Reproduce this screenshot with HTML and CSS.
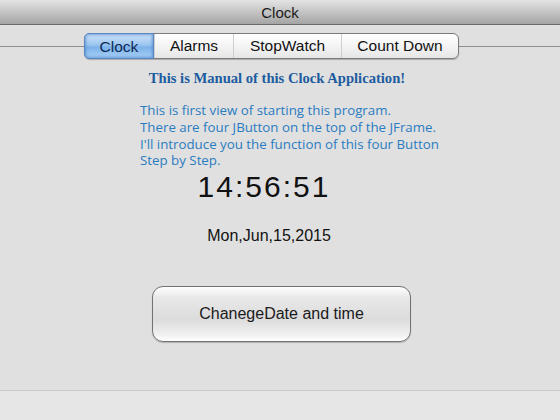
FILE: index.html
```html
<!DOCTYPE html>
<html>
<head>
<meta charset="utf-8">
<link rel="stylesheet" href="styles.css">
</head>
<body>
<div class="window">
  <div class="titlebar">Clock</div>
  <div class="tabrow">
    <div class="line-left"></div>
    <div class="tabs">
      <div class="tab selected t1">Clock</div>
      <div class="tab t2">Alarms</div>
      <div class="tab t3">StopWatch</div>
      <div class="tab t4">Count Down</div>
    </div>
    <div class="line-right"></div>
  </div>
  <div class="content">
    <h1 class="heading">This is Manual of this Clock Application!</h1>
    <p class="manual">This is first view of starting this program.<br>There are four JButton on the top of the JFrame.<br>I'll introduce you the function of this four Button<br>Step by Step.</p>
    <div class="time">14:56:51</div>
    <div class="date">Mon,Jun,15,2015</div>
    <div class="btnrow"><div class="change-btn">ChanegeDate and time</div></div>
  </div>
  <div class="footer"></div>
</div>
</body>
</html>
```
FILE: styles.css
```css
html, body {
  margin: 0;
  padding: 0;
  width: 560px;
  height: 420px;
  overflow: hidden;
  background: #e0e0e0;
  font-family: "Liberation Sans", Arial, sans-serif;
}
.window {
  width: 560px;
  height: 420px;
  display: flex;
  flex-direction: column;
}
.titlebar {
  height: 24px;
  border-bottom: 1px solid #6a6a6a;
  background: linear-gradient(#e4e4e4, #c4c4c4 50%, #a4a4a4);
  text-align: center;
  font-size: 15px;
  line-height: 25px;
  color: #1a1a1a;
}
.tabrow {
  display: flex;
  align-items: center;
  margin-top: 8px;
  height: 26px;
}
.line-left {
  width: 84px;
  height: 1px;
  background: #8e8e8e;
}
.line-right {
  flex: 1;
  height: 1px;
  background: #8e8e8e;
}
.tabs {
  display: flex;
  height: 26px;
  box-sizing: border-box;
  border: 1px solid #7a7a7a;
  border-radius: 6px;
  background: linear-gradient(#ffffff, #f4f4f4 50%, #e6e6e6);
  box-shadow: 0 1px 1px rgba(0,0,0,0.25);
}
.tab {
  font-size: 15.5px;
  line-height: 24px;
  text-align: center;
  color: #111;
  border-left: 1px solid #cfcfcf;
}
.tab.t1 { width: 69px; border-left: none; }
.t2 { width: 78px; }
.t3 { width: 107px; }
.t4 { width: 116px; }
.tab.selected {
  color: #0f2a55;
  background: linear-gradient(#cfe3f8, #9cc6f0 45%, #7cb2ea 55%, #a9d0f5);
  border-radius: 5px 0 0 5px;
  box-shadow: 0 0 3px 1px rgba(60,120,200,0.6) inset;
  margin: -1px 0 -1px -1px;
  height: 26px;
  line-height: 26px;
  width: 70px;
  border: 1px solid #5a88c0;
  box-sizing: border-box;
}
.content {
  flex: 1;
  display: flex;
  flex-direction: column;
}
.heading {
  margin: 9px 0 0 0;
  text-align: center;
  width: 554px;
  font-family: "Liberation Serif", "Times New Roman", serif;
  font-weight: bold;
  font-size: 14.6px;
  line-height: 20px;
  color: #1d5c9f;
}
.manual {
  margin: 14px 0 0 140px;
  font-family: "Open Sans", "Noto Sans", sans-serif;
  font-size: 13.3px;
  line-height: 16.8px;
  color: #2a7cc0;
}
.time {
  margin: 1px 0 0 0;
  width: 528px;
  text-align: center;
  font-size: 30px;
  letter-spacing: 2px;
  line-height: 34px;
  color: #111;
}
.date {
  margin-top: 22px;
  width: 538px;
  text-align: center;
  font-size: 16px;
  line-height: 20px;
  color: #111;
}
.btnrow {
  margin-top: 40px;
  padding-left: 152px;
  display: flex;
}
.change-btn {
  width: 259px;
  height: 56px;
  box-sizing: border-box;
  border: 1px solid #727272;
  border-radius: 11px;
  background: linear-gradient(#ffffff, #e8e8e8 20%, #dcdcdc 60%, #f2f2f2 90%, #ffffff);
  box-shadow: 0 1px 1px rgba(0,0,0,0.2);
  display: flex;
  align-items: center;
  justify-content: center;
  font-size: 16px;
  color: #1a1a1a;
}
.footer {
  height: 29px;
  border-top: 1px solid #cbcbcb;
  background: #e6e6e6;
}
```
